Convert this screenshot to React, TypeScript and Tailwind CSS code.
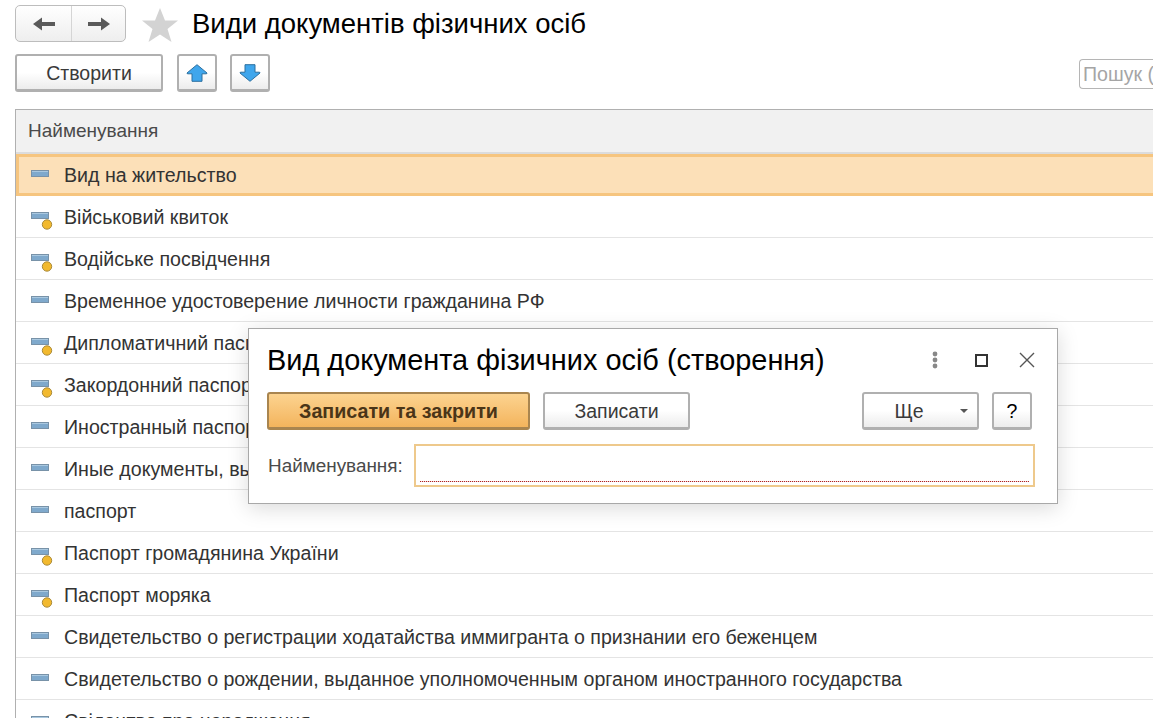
const font = "font-['Liberation_Sans',Arial,sans-serif]";
const btnBase = 'flex items-center justify-center rounded-[3px] border-2 border-[#b0b0b0] border-b-[3px] bg-gradient-to-b from-white via-white to-[#ececec] text-[#3a3a3a]';
const btn = `${btnBase} pt-[2px] text-[19.5px]`;

const rows = [
  { name: 'Вид на жительство', dot: false, selected: true },
  { name: 'Військовий квиток', dot: true },
  { name: 'Водійське посвідчення', dot: true },
  { name: 'Временное удостоверение личности гражданина РФ', dot: false },
  { name: 'Дипломатичний паспорт', dot: true },
  { name: 'Закордонний паспорт', dot: true },
  { name: 'Иностранный паспорт', dot: false },
  { name: 'Иные документы, выданные органами', dot: false },
  { name: 'паспорт', dot: false },
  { name: 'Паспорт громадянина України', dot: true },
  { name: 'Паспорт моряка', dot: true },
  { name: 'Свидетельство о регистрации ходатайства иммигранта о признании его беженцем', dot: false },
  { name: 'Свидетельство о рождении, выданное уполномоченным органом иностранного государства', dot: false },
  { name: 'Свідоцтво про народження', dot: false },
];

function RowIcon({ dot }: { dot: boolean }) {
  return (
    <svg width="22" height="24" viewBox="0 0 22 24" className="shrink-0">
      <rect x="0.5" y="6.5" width="17" height="6" fill="#7fa9cc" stroke="#7892a8" />
      <rect x="1" y="7" width="16" height="1" fill="#a9c8e0" />
      {dot && <circle cx="16" cy="18.5" r="4.7" fill="#f2b92e" stroke="#a98a3a" />}
    </svg>
  );
}

function UpIcon() {
  return (
    <svg width="22" height="18" viewBox="0 0 22 18">
      <path d="M11 0.7 L21 9 Q21.3 9.8 20 9.8 L16 9.8 L16 17.3 L6 17.3 L6 9.8 L2 9.8 Q0.7 9.8 1 9 Z" fill="#3fa6ec" stroke="#2b6f9f" strokeWidth="1" strokeLinejoin="round" />
    </svg>
  );
}

function DownIcon() {
  return (
    <svg width="22" height="18" viewBox="0 0 22 18">
      <path d="M11 17.3 L21 9 Q21.3 8.2 20 8.2 L16 8.2 L16 0.7 L6 0.7 L6 8.2 L2 8.2 Q0.7 8.2 1 9 Z" fill="#3fa6ec" stroke="#2b6f9f" strokeWidth="1" strokeLinejoin="round" />
    </svg>
  );
}

function NavArrow({ flip }: { flip?: boolean }) {
  return (
    <svg width="22" height="14" viewBox="0 0 22 14" className={flip ? 'rotate-180' : ''}>
      <path d="M0 7 L9 0.5 L9 5 L22 5 L22 9 L9 9 L9 13.5 Z" fill="#5a5a5a" />
    </svg>
  );
}

export default function App() {
  return (
    <div className={`${font} relative h-[718px] w-[1153px] overflow-hidden bg-white`}>
      <div className="flex h-[48px] items-start pl-[15px] pt-[5px]">
        <div className="flex h-[37px] w-[111px] rounded-[5px] border border-[#bdbdbd] bg-gradient-to-b from-white to-[#eeeeee]">
          <div className="flex w-[56px] items-center justify-center border-r border-[#d5d5d5]">
            <NavArrow />
          </div>
          <div className="flex flex-1 items-center justify-center">
            <NavArrow flip />
          </div>
        </div>
        <svg width="38" height="36" viewBox="0 0 38 36" className="ml-[15px] mt-[2px]">
          <path d="M19 1 L24 13.5 L37 13.5 L26.5 22 L30.5 35 L19 27.5 L7.5 35 L11.5 22 L1 13.5 L14 13.5 Z" fill="#d3d3d3" />
        </svg>
        <h1 className="ml-[13px] text-[27.5px] leading-[38px] text-black">Види документів фізичних осіб</h1>
      </div>

      <div className="flex h-[61px] items-start pl-[15px] pt-[6px]">
        <button className={`${btn} h-[38px] w-[148px]`}>Створити</button>
        <button className={`${btnBase} ml-[14px] h-[38px] w-[40px]`}><UpIcon /></button>
        <button className={`${btnBase} ml-[13px] h-[38px] w-[40px]`}><DownIcon /></button>
        <div className="ml-auto mt-[5px] flex h-[30px] w-[74px] items-center overflow-hidden whitespace-nowrap rounded-l-[4px] border border-r-0 border-[#b5b5b5] pl-[3px] pt-[2px] text-[19.6px] text-[#a5a5a5]">
          Пошук (
        </div>
      </div>

      <div className="ml-[15px] border-l border-t border-[#b0b0b0]">
        <div className="flex h-[44px] items-center border-b-2 border-[#dcdcdc] bg-[#f1f1f1] pl-[12px] text-[19px] text-[#4a4a4a]">
          Найменування
        </div>
        {rows.map((r) => (
          <div
            key={r.name}
            className={`flex h-[42px] items-center text-[19.6px] text-[#333333] ${
              r.selected ? 'border-[3px] border-r-0 border-[#f6c57f] bg-[#fce0b8] pl-[12px] pt-[1px]' : 'border-b border-[#e4e4e4] pl-[15px] pt-[2px]'
            }`}
          >
            <RowIcon dot={!!r.dot} />
            <span className="ml-[11px] whitespace-nowrap">{r.name}</span>
          </div>
        ))}
      </div>

      <div className="absolute left-[248px] top-[328px] h-[176px] w-[810px] border border-[#a8a8a8] bg-white pl-[18px] pr-[19px] shadow-[0_4px_20px_rgba(0,0,0,0.15)]">
        <div className="flex h-[63px] items-center">
          <div className="whitespace-nowrap pt-[1px] text-[28.9px] text-black">Вид документа фізичних осіб (створення)</div>
          <svg width="120" height="20" viewBox="0 0 120 20" className="ml-auto mr-[2px] mb-[2px]">
            <circle cx="19" cy="4" r="2.4" fill="#888888" />
            <circle cx="19" cy="10" r="2.4" fill="#888888" />
            <circle cx="19" cy="16" r="2.4" fill="#888888" />
            <rect x="60" y="5" width="11" height="11" fill="none" stroke="#333333" strokeWidth="2" />
            <path d="M104 3 L118 17 M118 3 L104 17" stroke="#555555" strokeWidth="1.4" fill="none" />
          </svg>
        </div>
        <div className="flex h-[38px] items-start">
          <button className="flex h-[38px] w-[263px] items-center justify-center rounded-[3px] border-2 border-b-[3px] border-[#a9854f] bg-gradient-to-b from-[#fcd38f] to-[#f3b45c] pt-[2px] text-[19.7px] font-bold text-[#4a3518]">
            Записати та закрити
          </button>
          <button className={`${btn} ml-[13px] h-[38px] w-[147px]`}>Записати</button>
          <button className={`${btn} relative ml-[172px] h-[38px] w-[117px] pr-[23px]`}>
            Ще
            <span className="absolute right-[9px] top-[15px] h-0 w-0 border-x-4 border-t-4 border-x-transparent border-t-[#555555]" />
          </button>
          <button className={`${btn} ml-[13px] h-[38px] w-[40px] !text-black`}>?</button>
        </div>
        <div className="mt-[14px] flex items-center">
          <label className="w-[147px] whitespace-nowrap pl-[1px] pt-[1px] text-[18.9px] text-[#4a4a4a]">Найменування:</label>
          <div className="relative h-[43px] w-[621px] border-2 border-[#eec98c] bg-white">
            <div className="absolute bottom-[3px] left-[4px] right-[4px] h-px bg-[repeating-linear-gradient(90deg,#b02020_0,#b02020_1px,#f0d8d8_1px,#f0d8d8_2px)]" />
          </div>
        </div>
      </div>
    </div>
  );
}
